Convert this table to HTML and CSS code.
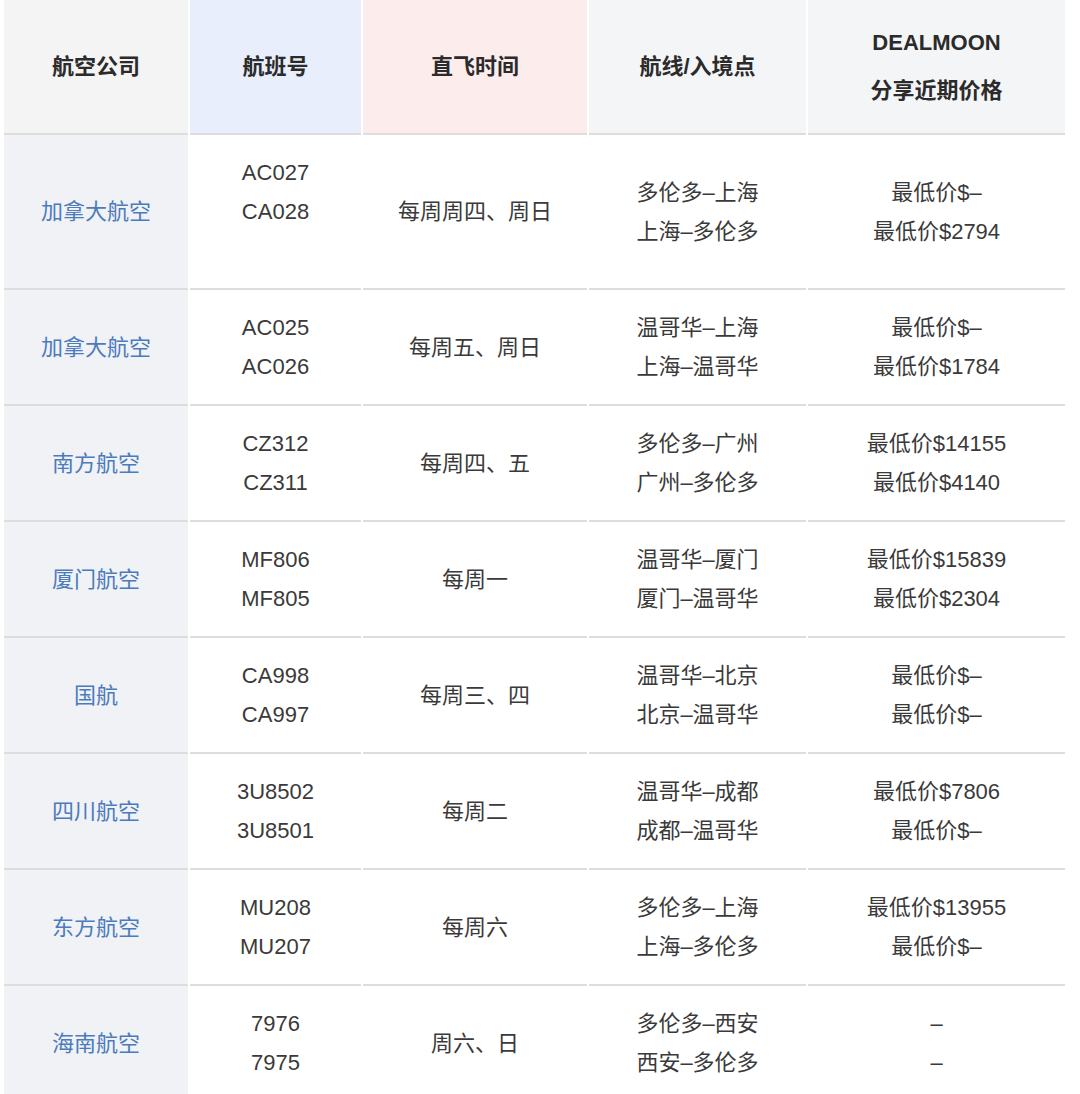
FILE: index.html
```html
<!DOCTYPE html>
<html lang="zh">
<head>
<meta charset="utf-8">
<title>直飞航班</title>
<link rel="stylesheet" href="styles.css">
</head>
<body>
<table class="flights">
  <thead>
    <tr>
      <th class="c-air">航空公司</th>
      <th class="c-no">航班号</th>
      <th class="c-time">直飞时间</th>
      <th class="c-route">航线/入境点</th>
      <th class="c-price">DEALMOON<br>分享近期价格</th>
    </tr>
  </thead>
  <tbody>
    <tr class="tall">
      <td class="air">加拿大航空</td>
      <td>AC027<br>CA028<br>&nbsp;</td>
      <td>每周周四、周日</td>
      <td>多伦多–上海<br>上海–多伦多</td>
      <td>最低价$–<br>最低价$2794</td>
    </tr>
    <tr>
      <td class="air">加拿大航空</td>
      <td>AC025<br>AC026</td>
      <td>每周五、周日</td>
      <td>温哥华–上海<br>上海–温哥华</td>
      <td>最低价$–<br>最低价$1784</td>
    </tr>
    <tr>
      <td class="air">南方航空</td>
      <td>CZ312<br>CZ311</td>
      <td>每周四、五</td>
      <td>多伦多–广州<br>广州–多伦多</td>
      <td>最低价$14155<br>最低价$4140</td>
    </tr>
    <tr>
      <td class="air">厦门航空</td>
      <td>MF806<br>MF805</td>
      <td>每周一</td>
      <td>温哥华–厦门<br>厦门–温哥华</td>
      <td>最低价$15839<br>最低价$2304</td>
    </tr>
    <tr>
      <td class="air">国航</td>
      <td>CA998<br>CA997</td>
      <td>每周三、四</td>
      <td>温哥华–北京<br>北京–温哥华</td>
      <td>最低价$–<br>最低价$–</td>
    </tr>
    <tr>
      <td class="air">四川航空</td>
      <td>3U8502<br>3U8501</td>
      <td>每周二</td>
      <td>温哥华–成都<br>成都–温哥华</td>
      <td>最低价$7806<br>最低价$–</td>
    </tr>
    <tr>
      <td class="air">东方航空</td>
      <td>MU208<br>MU207</td>
      <td>每周六</td>
      <td>多伦多–上海<br>上海–多伦多</td>
      <td>最低价$13955<br>最低价$–</td>
    </tr>
    <tr>
      <td class="air">海南航空</td>
      <td>7976<br>7975</td>
      <td>周六、日</td>
      <td>多伦多–西安<br>西安–多伦多</td>
      <td>–<br>–</td>
    </tr>
  </tbody>
</table>
</body>
</html>
```
FILE: styles.css
```css
html, body {
  margin: 0;
  padding: 0;
  background: #ffffff;
}

body {
  font-family: "Liberation Sans", "Noto Sans CJK SC", sans-serif;
  color: #333333;
}

.flights {
  margin-left: 2px;
  border-collapse: separate;
  border-spacing: 2px 0;
  table-layout: fixed;
  width: 1065px;
}

.flights th,
.flights td {
  text-align: center;
  vertical-align: middle;
  border-bottom: 2px solid #dddddd;
  padding: 0;
}

.flights th {
  font-size: 22px;
  font-weight: bold;
  line-height: 48px;
  height: 133px;
  color: #2b2b2b;
  background: #f4f5f7;
}

.flights th.c-air { width: 184px; background: #f4f4f4; }
.flights th.c-no { width: 171px; background: #e8eefb; }
.flights th.c-time { width: 224px; background: #fcecec; }
.flights th.c-route { width: 217px; background: #f4f5f7; }
.flights th.c-price { width: 257px; background: #f4f5f7; }

.flights td {
  font-size: 22px;
  line-height: 39px;
  height: 114px;
  color: #3a3a3a;
}

.flights tr.tall td {
  height: 153px;
}

.flights td.air {
  background: #f0f2f5;
  color: #4b7bbd;
}
```
